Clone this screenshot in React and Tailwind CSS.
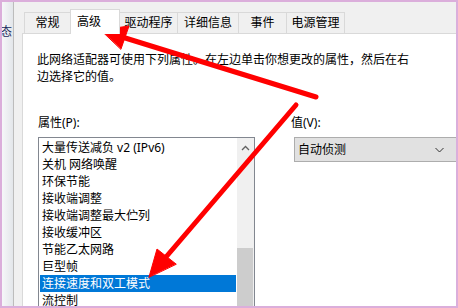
const font = { fontFamily: '"Noto Sans", "Noto Sans CJK SC", sans-serif' };

const tabs = [
  { label: "常规", w: "w-[47px]" },
  { label: "高级", w: "w-[50px]", active: true },
  { label: "驱动程序", w: "w-[58px]" },
  { label: "详细信息", w: "w-[61px]" },
  { label: "事件", w: "w-[48px]" },
  { label: "电源管理", w: "w-[58px]" },
];

const props = [
  "大量传送减负 v2 (IPv6)",
  "关机 网络唤醒",
  "环保节能",
  "接收端调整",
  "接收端调整最大伫列",
  "接收缓冲区",
  "节能乙太网路",
  "巨型帧",
  "连接速度和双工模式",
  "流控制",
];

function Arrows() {
  return (
    <svg
      className="absolute left-[-2px] top-[-2px] pointer-events-none"
      width="458"
      height="308"
      viewBox="0 0 458 308"
    >
      <g fill="#ff0000" stroke="#ff0000" strokeLinecap="round">
        <line x1="316" y1="97" x2="122" y2="37" strokeWidth="5" />
        <polygon points="101,30 129,26 121,49" strokeWidth="1" />
        <line x1="296" y1="105" x2="166" y2="257" strokeWidth="5" />
        <polygon points="149,277 157,249 176,264" strokeWidth="1" />
      </g>
    </svg>
  );
}

export default function App() {
  return (
    <div
      className="w-[458px] h-[308px] relative overflow-hidden bg-[#f0f0f0] border-2 border-[#dbaedb] flex text-[12px] leading-[17px] text-black"
      style={font}
    >
      {/* window behind */}
      <div className="w-[12px] shrink-0 bg-gradient-to-r from-[#f6f7f9] to-[#e3e6ea] border-r border-[#bcbcbc] pt-[21px] overflow-hidden">
        <div className="-ml-[2px] text-[#1b2b5c]">态</div>
      </div>
      <div className="w-[8px] shrink-0" />

      <div className="flex-1 min-w-0 flex flex-col">
        {/* tab strip */}
        <div className="h-[31px] shrink-0 flex items-end pl-[2px]">
          {tabs.map((t, i) =>
            t.active ? (
              <div
                key={t.label}
                className={`${t.w} h-[25px] -mb-px -ml-px relative z-10 bg-white border-t border-x border-[#d9d9d9] pl-[6px] pt-[3px]`}
              >
                {t.label}
              </div>
            ) : (
              <div
                key={t.label}
                className={`${t.w} h-[21px] border-t border-r border-[#d9d9d9] ${i === 0 ? "border-l" : ""} flex justify-center pt-[1px]`}
              >
                {t.label}
              </div>
            )
          )}
        </div>

        {/* panel */}
        <div className="flex-1 bg-white border-l border-t border-[#d9d9d9] pt-[17px] overflow-hidden">
          <p className="ml-[14px] whitespace-nowrap">
            此网络适配器可使用下列属性。在左边单击你想更改的属性，然后在右
            <br />
            边选择它的值。
          </p>

          <div className="flex mt-[29px] ml-[15px]">
            <div className="w-[217px] shrink-0">
              <div>属性(P):</div>
              <div className="mt-[6px] h-[200px] border border-[#828790] flex">
                <div className="flex-1 pt-px">
                  {props.map((p, i) => (
                    <div
                      key={p}
                      className={`h-[17px] mx-px pl-[2px] whitespace-nowrap ${i === 8 ? "bg-[#0078d7] text-white" : ""}`}
                    >
                      {p}
                    </div>
                  ))}
                </div>
                <div className="w-[17px] bg-[#f0f0f0] flex flex-col">
                  <div className="h-[17px] mt-px flex items-center justify-center">
                    <svg width="9" height="6" viewBox="0 0 9 6">
                      <path d="M1 5 L4.5 1.5 L8 5" fill="none" stroke="#606060" strokeWidth="1.3" />
                    </svg>
                  </div>
                  <div className="mt-[92px] flex-1 mr-[1px] bg-[#cdcdcd]" />
                </div>
              </div>
            </div>

            <div className="ml-[36px] shrink-0">
              <div>值(V):</div>
              <div className="mt-[6px] ml-[3px] w-[170px] h-[25px] bg-[#e1e1e1] border border-[#adadad] flex items-center pl-[3px]">
                <span className="flex-1">自动侦测</span>
                <svg className="mr-[19px]" width="9" height="6" viewBox="0 0 9 6">
                  <path d="M0.5 1 L4.5 5 L8.5 1" fill="none" stroke="#333" strokeWidth="1" />
                </svg>
              </div>
            </div>
          </div>
        </div>
      </div>

      <Arrows />
    </div>
  );
}
